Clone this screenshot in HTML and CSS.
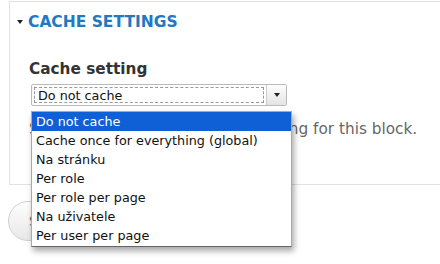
FILE: index.html
```html
<!DOCTYPE html>
<html>
  <head>
    <meta charset="UTF-8">
    <title>Cache settings</title>
    <link rel="stylesheet" href="styles.css">
  </head>
  <body>
    <div class="page">
      <!-- fieldset s nastavením cache -->
      <div class="fieldset">
        <div class="legend"><span class="arrow"></span>Cache settings</div>
        <div class="form-item">
          <div class="label">Cache setting</div>
          <div class="select">
            <div class="select-value">Do not cache</div>
            <div class="select-btn"><span class="caret"></span></div>
          </div>
          <div class="description">Select the appropriate cache setting for this block.</div>
        </div>
      </div>
      <div class="actions">
        <button class="button">Save block</button>
      </div>

      <!-- otevřený seznam voleb -->
      <ul class="dropdown">
        <li class="option active">Do not cache</li>
        <li class="option">Cache once for everything (global)</li>
        <li class="option">Na stránku</li>
        <li class="option">Per role</li>
        <li class="option">Per role per page</li>
        <li class="option">Na uživatele</li>
        <li class="option">Per user per page</li>
      </ul>
    </div>
  </body>
</html>
```

FILE: styles.css
```css
/* reset */
html,body{margin:0;padding:0;background:#fff;font-family:'DejaVu Sans',Verdana,sans-serif;color:#333;}
.page{position:relative;width:440px;height:264px;overflow:hidden;padding-top:1px;box-sizing:border-box;}

/* fieldset */
.fieldset{margin-left:9px;width:480px;height:184px;border:1px solid #e2e2e2;border-right:none;box-sizing:border-box;}
.legend{display:flex;align-items:center;margin:11px 0 0 7px;height:18px;font-size:15.5px;font-weight:bold;text-transform:uppercase;color:#2079c2;}
.arrow{width:0;height:0;border-left:3.5px solid transparent;border-right:3.5px solid transparent;border-top:4px solid #222;margin-right:5px;}

.form-item{padding-left:19px;}
.label{margin-top:29px;font-size:15.3px;font-weight:bold;color:#333;line-height:18px;}
.select{display:flex;width:256px;height:22px;margin:6px 0 0 2px;border:1px solid #b9b9b9;border-radius:2px;box-sizing:border-box;background:#fff;}
.select-value{flex:1;margin:2px;border:1px dashed #999;font-size:12.75px;line-height:14px;padding:1px 3px;color:#111;}
.select-btn{width:19px;border-left:1px solid #ccc;background:linear-gradient(#fdfdfd,#e4e4e4);display:flex;align-items:center;justify-content:center;}
.caret{width:0;height:0;border-left:3px solid transparent;border-right:3px solid transparent;border-top:4px solid #222;}
.description{margin-top:14px;font-size:15.3px;color:#666;line-height:18px;white-space:nowrap;}

/* tlačítko pod fieldsetem */
.actions{padding:16px 0 0 8px;}
.button{height:40px;padding:0 20px;border:1px solid #d0d0d0;border-radius:20px;background:linear-gradient(#fefefe,#e8e8e8);font-family:'DejaVu Sans',sans-serif;font-size:14px;color:#555;}

/* rozbalený seznam */
.dropdown{position:absolute;left:31px;top:111px;width:259px;margin:0;padding:0 0 1px;list-style:none;background:#fff;border:1px solid #aaa;border-bottom-color:#666;box-shadow:2px 4px 6px rgba(0,0,0,0.35);font-size:12.75px;}
.option{height:19px;line-height:19px;padding-left:4px;color:#111;white-space:nowrap;}
.option.active{background:#0f5fd6;color:#fff;}
```
